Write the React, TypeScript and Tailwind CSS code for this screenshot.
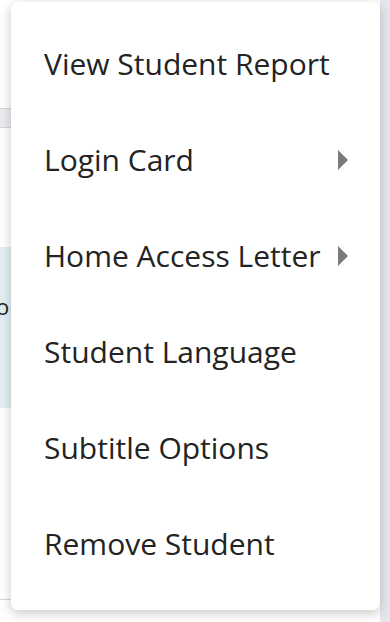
const items = [
  { label: "View Student Report", sub: false },
  { label: "Login Card", sub: true },
  { label: "Home Access Letter", sub: true },
  { label: "Student Language", sub: false },
  { label: "Subtitle Options", sub: false },
  { label: "Remove Student", sub: false },
];

const Caret = () => (
  <svg width="10" height="20" viewBox="0 0 10 20" className="shrink-0 fill-[#7a7a7a]">
    <path d="M0 0 L10 10 L0 20 Z" />
  </svg>
);

export default function App() {
  return (
    <div className="relative flex h-[622px] w-[390px] overflow-hidden bg-white font-['Open_Sans','Noto_Sans',sans-serif]">
      {/* page behind the menu */}
      <div className="flex flex-1 flex-col">
        <div className="h-[108px]" />
        <div className="h-[20px] border-y border-[#d6d6dc] bg-[#ebebf0]" />
        <div className="h-[119px]" />
        <div className="h-[161px] bg-[#e2f0f4] pt-[48px] text-[22px] leading-none text-[#222]">
          <span className="-ml-[4px]">o</span>
        </div>
        <div className="h-[192px] border-b border-[#d6d6dc]" />
      </div>
      <div className="w-[10px] bg-[#e6e6ee]" />

      {/* dropdown menu */}
      <div className="absolute left-[11px] top-[2px] w-[369px] rounded-[7px] bg-white pb-[18px] pt-[14px] shadow-[0_3px_12px_rgba(0,0,0,0.22)]">
        {items.map((it) => (
          <div
            key={it.label}
            className="flex h-[96px] items-center justify-between pl-[33px] pr-[32px] text-[30px] leading-none text-[#232323]"
          >
            <span>{it.label}</span>
            {it.sub && <Caret />}
          </div>
        ))}
      </div>
    </div>
  );
}
